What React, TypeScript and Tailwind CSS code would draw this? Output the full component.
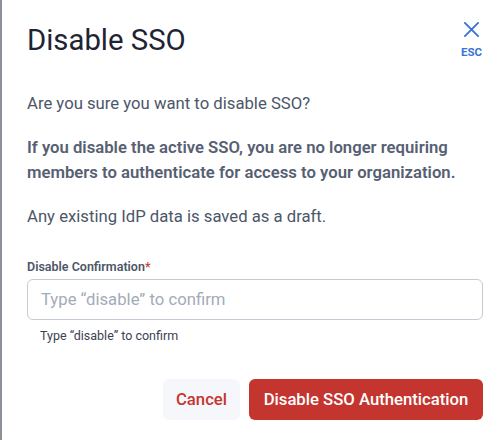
import React, { useState } from 'react';

export default function App() {
  const [value, setValue] = useState('');

  return (
    <div
      className="w-[502px] h-[440px] bg-white border-l-2 border-[#8b9099] overflow-hidden"
      style={{ fontFamily: 'Roboto, "Liberation Sans", sans-serif' }}
    >
      <div className="pl-[25px] pr-[19px]">
        {/* header */}
        <div className="flex items-start justify-between pt-[20px]">
          <h1 className="text-[29.3px] leading-[40px] text-[#1e2433]">Disable SSO</h1>
          <button className="flex flex-col items-center mt-[1px] mr-[1px] text-[#3a73d6]">
            <svg width="17" height="17" viewBox="0 0 18 18" fill="none" stroke="currentColor" strokeWidth="2" strokeLinecap="round">
              <path d="M2 2 L16 16 M16 2 L2 16" />
            </svg>
            <span className="text-[11.5px] font-bold leading-[12px] mt-[8px]">ESC</span>
          </button>
        </div>

        {/* body */}
        <div className="mt-[31px] text-[16.7px] leading-[25px] text-[#4c5668]">
          <p>Are you sure you want to disable SSO?</p>
          <p className="mt-[19px] font-semibold text-[#566072]">
            If you disable the active SSO, you are no longer requiring members to authenticate for access to your organization.
          </p>
          <p className="mt-[19px]">Any existing IdP data is saved as a draft.</p>
        </div>

        {/* field */}
        <div className="mt-[30px]">
          <label className="block text-[12.5px] leading-[16px] font-semibold text-[#4c5668]">
            Disable Confirmation<span className="text-[#d43a3a]">*</span>
          </label>
          <input
            value={value}
            onChange={(e) => setValue(e.target.value)}
            placeholder="Type “disable” to confirm"
            className="mt-[4px] w-[456px] h-[41px] rounded-[6px] border border-[#c5cbd4] px-[13px] text-[16.7px] text-[#1e2433] placeholder:text-[#a3abb8] outline-none"
          />
          <p className="mt-[8px] pl-[13px] text-[12.5px] leading-[16px] text-[#3b4250]">Type “disable” to confirm</p>
        </div>

        {/* actions */}
        <div className="flex justify-end gap-[9px] mt-[35px]">
          <button className="h-[41px] w-[77px] rounded-[6px] bg-[#f5f7fa] text-[16.7px] font-medium text-[#c5352f]">
            Cancel
          </button>
          <button className="h-[41px] w-[234px] rounded-[6px] bg-[#c5352f] text-[16.7px] font-medium text-white">
            Disable SSO Authentication
          </button>
        </div>
      </div>
    </div>
  );
}
